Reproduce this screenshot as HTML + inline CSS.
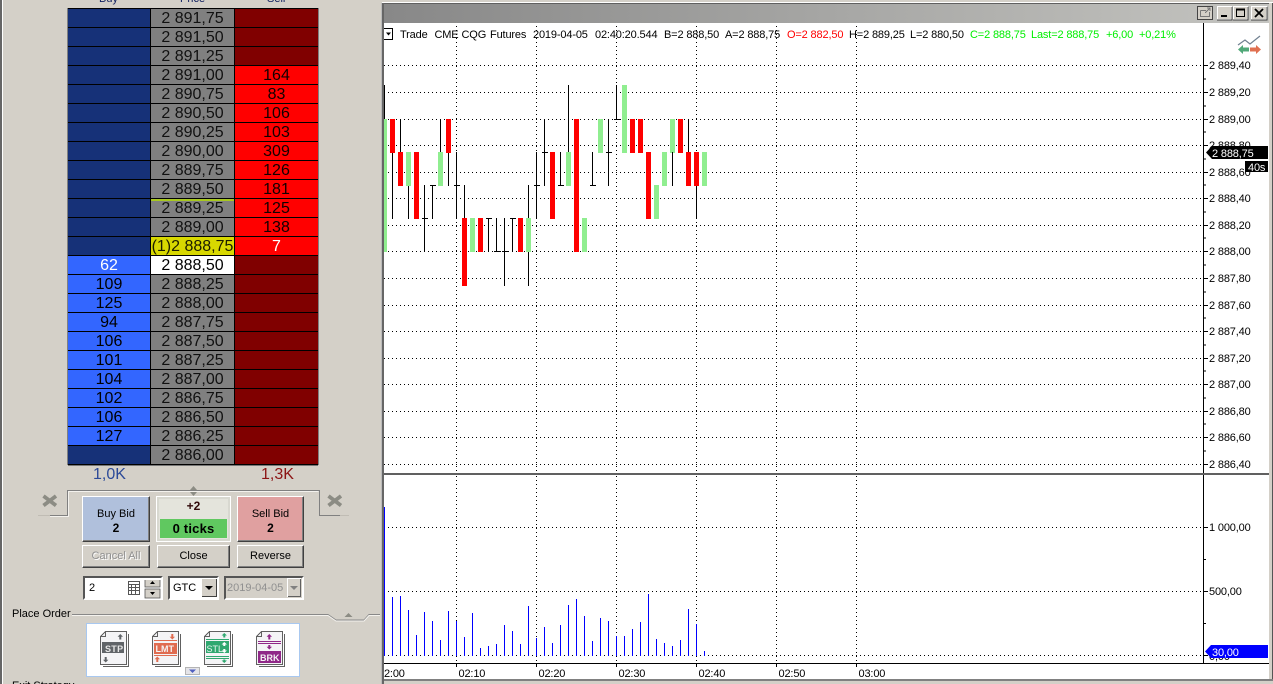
<!DOCTYPE html>
<html><head><meta charset="utf-8"><style>
html,body{margin:0;padding:0;width:1273px;height:684px;overflow:hidden;background:#d4d0c8;font-family:"Liberation Sans",sans-serif;color:#000}
#page{position:relative;width:1273px;height:684px;overflow:hidden;background:#d4d0c8}
.a{position:absolute}
.t{position:absolute;white-space:nowrap;font-size:11px;line-height:13px}
#lad{position:absolute;left:68px;top:8px;width:250px;height:457px;background:#000;box-shadow:-1px 0 #808080,1px 0 #808080,0 1px #777}
.r{display:flex;height:18px;border-top:1px solid #000;font-size:16px;line-height:19px;text-align:center}
.r div{height:18px;overflow:hidden;white-space:nowrap}
.b{width:82px;background:#163178}.B{width:82px;background:#3366ff}
.p{width:83px;margin:0 1px;background:#808080;color:#111}
.s{width:83px;background:#800000}.S{width:83px;background:#ff0000;color:#110000}
.btn{position:absolute;box-sizing:border-box;border:1px solid;border-color:#fff #404040 #404040 #fff;box-shadow:inset -1px -1px #808080;background:#d4d0c8;text-align:center;font-size:11px;line-height:21px;height:23px}
.big{height:46px;line-height:14px;padding-top:10px}
.big b{display:block;font-size:12px}
.fld{position:absolute;box-sizing:border-box;height:24px;top:576px;background:#fff;border:2px solid;border-color:#555 #fff #fff #555;font-size:11px;line-height:20px}
.ct text{letter-spacing:-.15px}
</style></head><body><div id="page">

<!-- left frame -->
<div class="a" style="left:0;top:0;width:2px;height:684px;background:#666"></div>
<div class="a" style="left:2px;top:0;width:1px;height:684px;background:#fff"></div>

<!-- DOM header -->
<div class="t" style="left:99px;top:-7px;color:#102060">Buy</div>
<div class="t" style="left:180px;top:-7px;color:#102060">Price</div>
<div class="t" style="left:267px;top:-7px;color:#102060">Sell</div>

<div id="lad">
<div class="r"><div class="b"></div><div class="p">2 891,75</div><div class="s"></div></div>
<div class="r"><div class="b"></div><div class="p">2 891,50</div><div class="s"></div></div>
<div class="r"><div class="b"></div><div class="p">2 891,25</div><div class="s"></div></div>
<div class="r"><div class="b"></div><div class="p">2 891,00</div><div class="S">164</div></div>
<div class="r"><div class="b"></div><div class="p">2 890,75</div><div class="S">83</div></div>
<div class="r"><div class="b"></div><div class="p">2 890,50</div><div class="S">106</div></div>
<div class="r"><div class="b"></div><div class="p">2 890,25</div><div class="S">103</div></div>
<div class="r"><div class="b"></div><div class="p">2 890,00</div><div class="S">309</div></div>
<div class="r"><div class="b"></div><div class="p">2 889,75</div><div class="S">126</div></div>
<div class="r"><div class="b"></div><div class="p">2 889,50</div><div class="S">181</div></div>
<div class="r"><div class="b"></div><div class="p" style="box-shadow:inset 0 2px #a8c820">2 889,25</div><div class="S">125</div></div>
<div class="r"><div class="b"></div><div class="p">2 889,00</div><div class="S">138</div></div>
<div class="r"><div class="b"></div><div class="p" style="background:#d8d800;color:#1c1c00">(1)2 888,75</div><div class="S" style="color:#fff">7</div></div>
<div class="r"><div class="B" style="color:#fff">62</div><div class="p" style="background:#fff;color:#000">2 888,50</div><div class="s"></div></div>
<div class="r"><div class="B">109</div><div class="p">2 888,25</div><div class="s"></div></div>
<div class="r"><div class="B">125</div><div class="p">2 888,00</div><div class="s"></div></div>
<div class="r"><div class="B">94</div><div class="p">2 887,75</div><div class="s"></div></div>
<div class="r"><div class="B">106</div><div class="p">2 887,50</div><div class="s"></div></div>
<div class="r"><div class="B">101</div><div class="p">2 887,25</div><div class="s"></div></div>
<div class="r"><div class="B">104</div><div class="p">2 887,00</div><div class="s"></div></div>
<div class="r"><div class="B">102</div><div class="p">2 886,75</div><div class="s"></div></div>
<div class="r"><div class="B">106</div><div class="p">2 886,50</div><div class="s"></div></div>
<div class="r"><div class="B">127</div><div class="p">2 886,25</div><div class="s"></div></div>
<div class="r"><div class="b"></div><div class="p">2 886,00</div><div class="s"></div></div>
</div>

<div class="t" style="left:93px;top:466px;font-size:16px;line-height:18px;color:#2c4a98">1,0K</div>
<div class="t" style="left:261px;top:466px;font-size:16px;line-height:18px;color:#8c1414">1,3K</div>

<!-- Center frame lines and X icons -->
<svg class="a" style="left:0;top:0" width="383" height="684" viewBox="0 0 383 684">
<g shape-rendering="crispEdges" fill="none">
<path d="M50 515.500H67.500V490.500H319.500V515.500H340" stroke="#808080"/>
<path d="M50 516.500H68.500V491.500H318.500" stroke="#f4f2ee"/>
<path d="M38 515.500H50M340 515.500H349" stroke="#c0bcb4"/>
</g>
<path d="M43.500 496L56 505.500M56 496L43.500 505.500M328.500 496L341 505.500M341 496L328.500 505.500" stroke="#8c8c84" stroke-width="3.800" fill="none"/>
<path d="M193.500 486L197 490H190ZM193.500 496L197 492H190Z" fill="#8c8c84"/>
<path d="M72 614.500H328L336 620H364L369 614.500H380" stroke="#888" fill="none"/>
<path d="M72 615.500H328L336 621H364L369 615.500H380" stroke="#f4f2ee" fill="none"/>
<path d="M348.500 613L352.500 617H344.500Z" fill="#8c8c84"/>
</svg>

<!-- Order buttons -->
<div class="btn big" style="left:82px;top:496px;width:68px;background:#b0c0dc">Buy Bid<b>2</b></div>
<div class="btn big" style="left:237px;top:496px;width:67px;background:#e0a0a0">Sell Bid<b>2</b></div>
<div class="a" style="left:156px;top:496px;width:75px;height:46px;box-sizing:border-box;border:1px solid #fff;background:#e4e4dc;box-shadow:inset 0 0 0 2px #d8d8d0"></div>
<div class="t" style="left:156px;top:500px;width:75px;text-align:center;font-size:12px;font-weight:bold;color:#300808">+2</div>
<div class="a" style="left:160px;top:519px;width:67px;height:19px;background:#60c860;font-size:13px;font-weight:bold;line-height:20px;text-align:center;letter-spacing:.2px">0 ticks</div>
<div class="btn" style="left:82px;top:545px;width:68px;color:#909090;text-shadow:1px 1px #fff">Cancel All</div>
<div class="btn" style="left:157px;top:545px;width:73px">Close</div>
<div class="btn" style="left:237px;top:545px;width:67px">Reverse</div>

<!-- Fields -->
<div class="fld" style="left:83px;width:80px;padding-left:4px">2</div>
<svg class="a" style="left:127px;top:580px" width="36" height="20" viewBox="0 0 36 20">
<g shape-rendering="crispEdges" fill="none" stroke="#555">
<path d="M1.500 1.500H12.500V14.500H1.500ZM1.500 4.500H12.500M1.500 7.500H12.500M1.500 10.500H12.500M4.500 4.500V14.500M8.500 4.500V14.500"/>
</g>
<rect x="18" y="-2" width="15" height="9" fill="#d4d0c8" stroke="#555" stroke-width=".8"/>
<rect x="18" y="9" width="15" height="9" fill="#d4d0c8" stroke="#555" stroke-width=".8"/>
<path d="M25.500 1L28 4H23ZM25.500 15L28 12H23Z" fill="#000"/>
</svg>
<div class="fld" style="left:168px;width:51px;padding-left:3px">GTC</div>
<div class="a" style="left:201px;top:578px;width:16px;height:19px;background:#d4d0c8;box-shadow:inset 1px 1px #fff,inset -1px -1px #404040"></div>
<svg class="a" style="left:201px;top:578px" width="16" height="19"><path d="M4 8H12L8 12Z" fill="#000"/></svg>
<div class="fld" style="left:224px;width:80px;background:#d4d0c8;color:#909090;padding-left:1px;font-size:11px">2019-04-05</div>
<div class="a" style="left:287px;top:578px;width:14px;height:19px;background:#d4d0c8;box-shadow:inset 1px 1px #fff,inset -1px -1px #606060"></div>
<svg class="a" style="left:287px;top:578px" width="14" height="19"><path d="M3 8H11L7 12Z" fill="#808080"/></svg>

<div class="t" style="left:12px;top:608px">Place Order</div>
<div class="t" style="left:12px;top:680px">Exit Strategy</div>

<!-- Place order icons -->
<div class="a" style="left:86px;top:623px;width:212px;height:52px;background:#fff;border:1px solid #a8c8f0"></div>
<svg class="a" style="left:0;top:0" width="383" height="684" viewBox="0 0 383 684" font-family="Liberation Sans, sans-serif" font-weight="bold" font-size="9">
<g transform="translate(100,631)">
<g shape-rendering="crispEdges">
<path d="M28.500 3V35.500H3" fill="none" stroke="#606060"/>
<path d="M5.500 .5H26.500V33.500H.5V5.500Z" fill="#f4f4f6" stroke="#606060"/>
<path d="M5.500 .5V5.500H.5" fill="none" stroke="#606060"/>
<rect x="2" y="11" width="22" height="11" fill="#606468"/>
</g>
<path d="M20.300 3L23 5.700H21.300V8.500H19.300V5.700H17.600Z M5.700 31.500L3 28.800H4.700V26H6.700V28.800H8.400Z" fill="#606468"/>
</g>
<text x="105" y="652" fill="#e8e8e8" letter-spacing=".3">STP</text>
<g transform="translate(152,631)">
<g shape-rendering="crispEdges">
<path d="M28.500 3V35.500H3" fill="none" stroke="#606060"/>
<path d="M5.500 .5H26.500V33.500H.5V5.500Z" fill="#f4f4f6" stroke="#606060"/>
<path d="M5.500 .5V5.500H.5" fill="none" stroke="#606060"/>
<rect x="2" y="9" width="23" height="1" fill="#e06c50"/>
<rect x="2" y="12" width="23" height="11" fill="#e06c50"/>
<rect x="2" y="24" width="23" height="1" fill="#e06c50"/>
</g>
<path d="M20.300 8.500L17.600 5.800H19.300V3H21.300V5.800H23Z M5.300 25.500L8 28.200H6.300V31H4.300V28.200H2.600Z" fill="#e06c50"/>
</g>
<text x="155.500" y="652" fill="#f4f4f4">LMT</text>
<g transform="translate(204,631)">
<g shape-rendering="crispEdges">
<path d="M28.500 3V35.500H3" fill="none" stroke="#606060"/>
<path d="M5.500 .5H26.500V33.500H.5V5.500Z" fill="#f4f4f6" stroke="#606060"/>
<path d="M5.500 .5V5.500H.5" fill="none" stroke="#606060"/>
<rect x="2" y="8" width="23" height="1" fill="#30a870"/>
<rect x="2" y="10" width="23" height="12" fill="#30a870"/>
<rect x="2" y="25" width="23" height="1" fill="#30a870"/>
<rect x="2" y="27" width="23" height="1" fill="#30a870"/>
</g>
<path d="M20.300 2L23 4.500H21.300V6.500H19.300V4.500H17.600Z M20.300 32L17.600 29.500H19.300V28.500H21.300V29.500H23Z" fill="#30a870"/>
<path d="M20.300 11L23 13.500H21.300V15H19.300V13.500H17.600Z M20.300 22L17.600 19.500H19.300V18H21.300V19.500H23Z" fill="#fff"/>
</g>
<text x="206.500" y="652" fill="#e8f4ee" font-weight="normal">STL</text>
<g transform="translate(256,631)">
<g shape-rendering="crispEdges">
<path d="M28.500 3V35.500H3" fill="none" stroke="#606060"/>
<path d="M5.500 .5H26.500V33.500H.5V5.500Z" fill="#f4f4f6" stroke="#606060"/>
<path d="M5.500 .5V5.500H.5" fill="none" stroke="#606060"/>
<rect x="2" y="10" width="23" height="1" fill="#902888"/>
<rect x="2" y="12" width="23" height="1" fill="#902888"/>
<rect x="2" y="20" width="23" height="12" fill="#902888"/>
</g>
<path d="M13.300 3L16 5.700H14.300V8.500H12.300V5.700H10.600Z M13.300 18.500L10.600 15.800H12.300V14H14.300V15.800H16Z" fill="#902888"/>
</g>
<text x="260" y="661" fill="#f4f4f4">BRK</text>
<rect x="185.500" y="667.500" width="14" height="7" fill="#e4e4e8" stroke="#b4b4b4"/>
<path d="M189 669.500H196L192.500 673Z" fill="#5060c0"/>
</svg>

<!-- Chart window -->
<div class="a" style="left:380px;top:0;width:893px;height:3px;background:#d4d0c8"></div>
<div class="a" style="left:382px;top:2px;width:891px;height:1px;background:#fff"></div>
<div class="a" style="left:383px;top:3px;width:890px;height:1px;background:#606060"></div>
<div class="a" style="left:384px;top:4px;width:885px;height:19px;background:linear-gradient(90deg,#888,#c4c4c0)"></div>
<div class="a" style="left:384px;top:23px;width:885px;height:656px;background:#fff"></div>
<div class="a" style="left:381px;top:3px;width:1px;height:681px;background:#bbb"></div>
<div class="a" style="left:382px;top:3px;width:2px;height:681px;background:#666"></div>
<div class="a" style="left:1269px;top:3px;width:3px;height:681px;background:#d4d0c8"></div>
<div class="a" style="left:1272px;top:3px;width:1px;height:681px;background:#555"></div>
<div class="a" style="left:384px;top:679px;width:889px;height:2px;background:#808080"></div>
<div class="a" style="left:384px;top:681px;width:889px;height:3px;background:#d4d0c8"></div>

<svg class="a ct" style="left:0;top:0" width="1273" height="684" viewBox="0 0 1273 684" font-family="Liberation Sans, sans-serif" font-size="11">
<g shape-rendering="crispEdges" fill="none">
<!-- title buttons -->
<rect x="1197.500" y="6.500" width="15" height="13" fill="#d4d0c8" stroke="#444"/>
<path d="M1200.500 10.500H1206M1200.500 10.500V16.500H1209.500V12" stroke="#777"/>
<path d="M1205 13L1210 8M1207 8H1210V11" stroke="#777"/>
<rect x="1217.500" y="6.500" width="14" height="13" fill="#d4d0c8" stroke="#fff"/>
<path d="M1232 7V20H1217" stroke="#404040"/>
<rect x="1221" y="15" width="6" height="2" fill="#000"/>
<rect x="1233.500" y="6.500" width="14" height="13" fill="#d4d0c8" stroke="#fff"/>
<path d="M1248 7V20H1233" stroke="#404040"/>
<rect x="1236.500" y="9.500" width="8" height="7" stroke="#000"/>
<path d="M1236 9.500H1245" stroke="#000" stroke-width="2"/>
<rect x="1251.500" y="6.500" width="15" height="13" fill="#d4d0c8" stroke="#fff"/>
<path d="M1267 7V20H1251" stroke="#404040"/>
<!-- grid -->
<path stroke="#000" stroke-dasharray="1 3" d="M384 65.500H1203M384 92.500H1203M384 119.500H1203M384 145.500H1203M384 172.500H1203M384 198.500H1203M384 225.500H1203M384 251.500H1203M384 278.500H1203M384 305.500H1203M384 331.500H1203M384 358.500H1203M384 384.500H1203M384 411.500H1203M384 437.500H1203M384 464.500H1203M384 527.500H1203M384 591.500H1203M384 655.500H1203"/>
<path stroke="#000" stroke-dasharray="1 3" d="M456.500 26V473M536.500 26V473M616.500 26V473M696.500 26V473M776.500 26V473M856.500 26V473M456.500 476V663M536.500 476V663M616.500 476V663M696.500 476V663M776.500 476V663M856.500 476V663"/>
<!-- ticks -->
<path stroke="#000" d="M1203.500 23V663M1204 65.500H1208M1204 92.500H1208M1204 119.500H1208M1204 145.500H1208M1204 172.500H1208M1204 198.500H1208M1204 225.500H1208M1204 251.500H1208M1204 278.500H1208M1204 305.500H1208M1204 331.500H1208M1204 358.500H1208M1204 384.500H1208M1204 411.500H1208M1204 437.500H1208M1204 464.500H1208M1204 527.500H1208M1204 591.500H1208M1204 655.500H1208M1204 79H1206M1204 106H1206M1204 132H1206M1204 159H1206M1204 185H1206M1204 212H1206M1204 238H1206M1204 265H1206M1204 292H1206M1204 318H1206M1204 345H1206M1204 371H1206M1204 398H1206M1204 424H1206M1204 451H1206M1204 559.500H1206M1204 623.500H1206"/>
<path stroke="#000" d="M384 663.500H1269M456.500 664V667M536.500 664V667M616.500 664V667M696.500 664V667M776.500 664V667M856.500 664V667"/>
<path stroke="#606060" stroke-width="2" d="M384 474H1269"/>
<!-- candles -->
<path fill="#90ee90" d="M384 119h3v133h-3zM406 152h5v34h-5zM438 152h5v34h-5zM470 218h5v34h-5zM526 218h5v34h-5zM566 152h5v34h-5zM582 218h5v34h-5zM598 119h5v34h-5zM622 85h5v68h-5zM654 185h5v34h-5zM662 152h5v34h-5zM670 119h5v34h-5zM702 152h5v34h-5z"/>
<path fill="#ff0000" d="M390 119h5v34h-5zM398 152h5v34h-5zM414 152h5v67h-5zM446 119h5v34h-5zM462 218h5v68h-5zM478 218h5v34h-5zM518 218h5v34h-5zM550 152h5v67h-5zM574 119h5v133h-5zM630 119h5v34h-5zM638 119h5v34h-5zM646 152h5v67h-5zM678 119h5v34h-5zM686 152h5v34h-5zM694 152h5v34h-5z"/>
<path stroke="#000" d="M384.500 85V119M392.500 153V219M400.500 119V152M408.500 186V219M424.500 185V252M422 218.500H428M432.500 185V219M430 185.500H436M440.500 119V152M448.500 153V186M456.500 152V219M454 185.500H460M464.500 185V218M488.500 218V252M486 218.500H492M496.500 218V252M494 251.500H500M504.500 218V286M502 251.500H508M512.500 218V252M510 218.500H516M528.500 185V218M528.500 252V286M536.500 152V219M534 185.500H540M544.500 119V186M542 152.500H548M560.500 152V186M558 185.500H564M568.500 85V152M592.500 152V186M590 185.500H596M608.500 119V186M606 152.500H612M616.500 85V119M614 119.500H620M672.500 152V186M688.500 119V152M696.500 186V219"/>
<!-- volume -->
<path stroke="#0000ff" d="M384.500 507V656M392.500 597V656M400.500 596V656M408.500 610V656M416.500 635V656M424.500 612V656M432.500 621V656M440.500 640V656M448.500 611V656M456.500 621V656M464.500 637V656M472.500 613V656M480.500 648V656M488.500 646V656M496.500 644V656M504.500 625V656M512.500 631V656M520.500 644V656M528.500 606V656M536.500 638V656M544.500 627V656M552.500 643V656M560.500 625V656M568.500 605V656M576.500 599V656M584.500 616V656M592.500 641V656M600.500 618V656M608.500 621V656M616.500 636V656M624.500 636V656M632.500 629V656M640.500 622V656M648.500 594V656M656.500 639V656M664.500 643V656M672.500 646V656M680.500 640V656M688.500 609V656M696.500 624V656M704.500 651V656"/>
<!-- dropdown -->
<path stroke="#000" d="M384 28.500H392.500V39.500H384"/>
</g>
<path d="M386 32.500H391L388.500 35.500Z" fill="#000"/>

<!-- logo -->
<path d="M1238 45L1245 40L1250 44L1260 36" fill="none" stroke="#708090" stroke-width="1.200"/>
<path d="M1238 49.500L1243 45V47.500H1249V51.500H1243V54Z" fill="#50a878"/>
<path d="M1261 49.500L1256 45V47.500H1250V51.500H1256V54Z" fill="#e07050"/>

<!-- close x -->
<path d="M1255 9L1263 17M1263 9L1255 17" stroke="#000" stroke-width="1.800"/>

<!-- info line -->
<g fill="#000">
<text x="400" y="38">Trade</text><text x="434.500" y="38">CME</text><text x="461.500" y="38">CQG</text><text x="490" y="38">Futures</text>
<text x="533" y="38">2019-04-05</text><text x="595" y="38">02:40:20.544</text>
<text x="664" y="38">B=2 888,50</text><text x="725" y="38">A=2 888,75</text>
<text x="787" y="38" fill="#ff0000">O=2 882,50</text><text x="849" y="38">H=2 889,25</text><text x="910" y="38">L=2 880,50</text>
<text x="970" y="38" fill="#00ee00">C=2 888,75</text><text x="1031" y="38" fill="#00ee00">Last=2 888,75</text><text x="1106" y="38" fill="#00ee00">+6,00</text><text x="1139" y="38" fill="#00ee00">+0,21%</text>
</g>

<!-- price axis -->
<g fill="#000">
<text x="1209" y="69">2 889,40</text><text x="1209" y="96">2 889,20</text><text x="1209" y="123">2 889,00</text><text x="1209" y="149">2 888,80</text><text x="1209" y="176">2 888,60</text><text x="1209" y="202">2 888,40</text><text x="1209" y="229">2 888,20</text><text x="1209" y="255">2 888,00</text><text x="1209" y="282">2 887,80</text><text x="1209" y="309">2 887,60</text><text x="1209" y="335">2 887,40</text><text x="1209" y="362">2 887,20</text><text x="1209" y="388">2 887,00</text><text x="1209" y="415">2 886,80</text><text x="1209" y="441">2 886,60</text><text x="1209" y="468">2 886,40</text>
<text x="1209" y="531">1 000,00</text><text x="1209" y="595">500,00</text><text x="1209" y="660">0,00</text>
</g>
<path d="M1206 152.500L1212 146H1268V159H1212Z" fill="#000"/>
<text x="1212" y="157" fill="#fff">2 888,75</text>
<rect x="1245" y="161" width="23" height="11" fill="#000"/>
<text x="1248" y="171" fill="#fff">40s</text>
<path d="M1205 651.500L1211 645H1268V658H1211Z" fill="#0000ff"/>
<text x="1212" y="656" fill="#fff">30,00</text>

<!-- time axis -->
<svg x="384" y="660" width="800" height="20" viewBox="384 660 800 20" overflow="hidden">
<text x="378" y="677">02:00</text>
<text x="458.500" y="677">02:10</text><text x="538.500" y="677">02:20</text><text x="618.500" y="677">02:30</text><text x="698.500" y="677">02:40</text><text x="778.500" y="677">02:50</text><text x="858.500" y="677">03:00</text>
</svg>
</svg>
</div></body></html>
